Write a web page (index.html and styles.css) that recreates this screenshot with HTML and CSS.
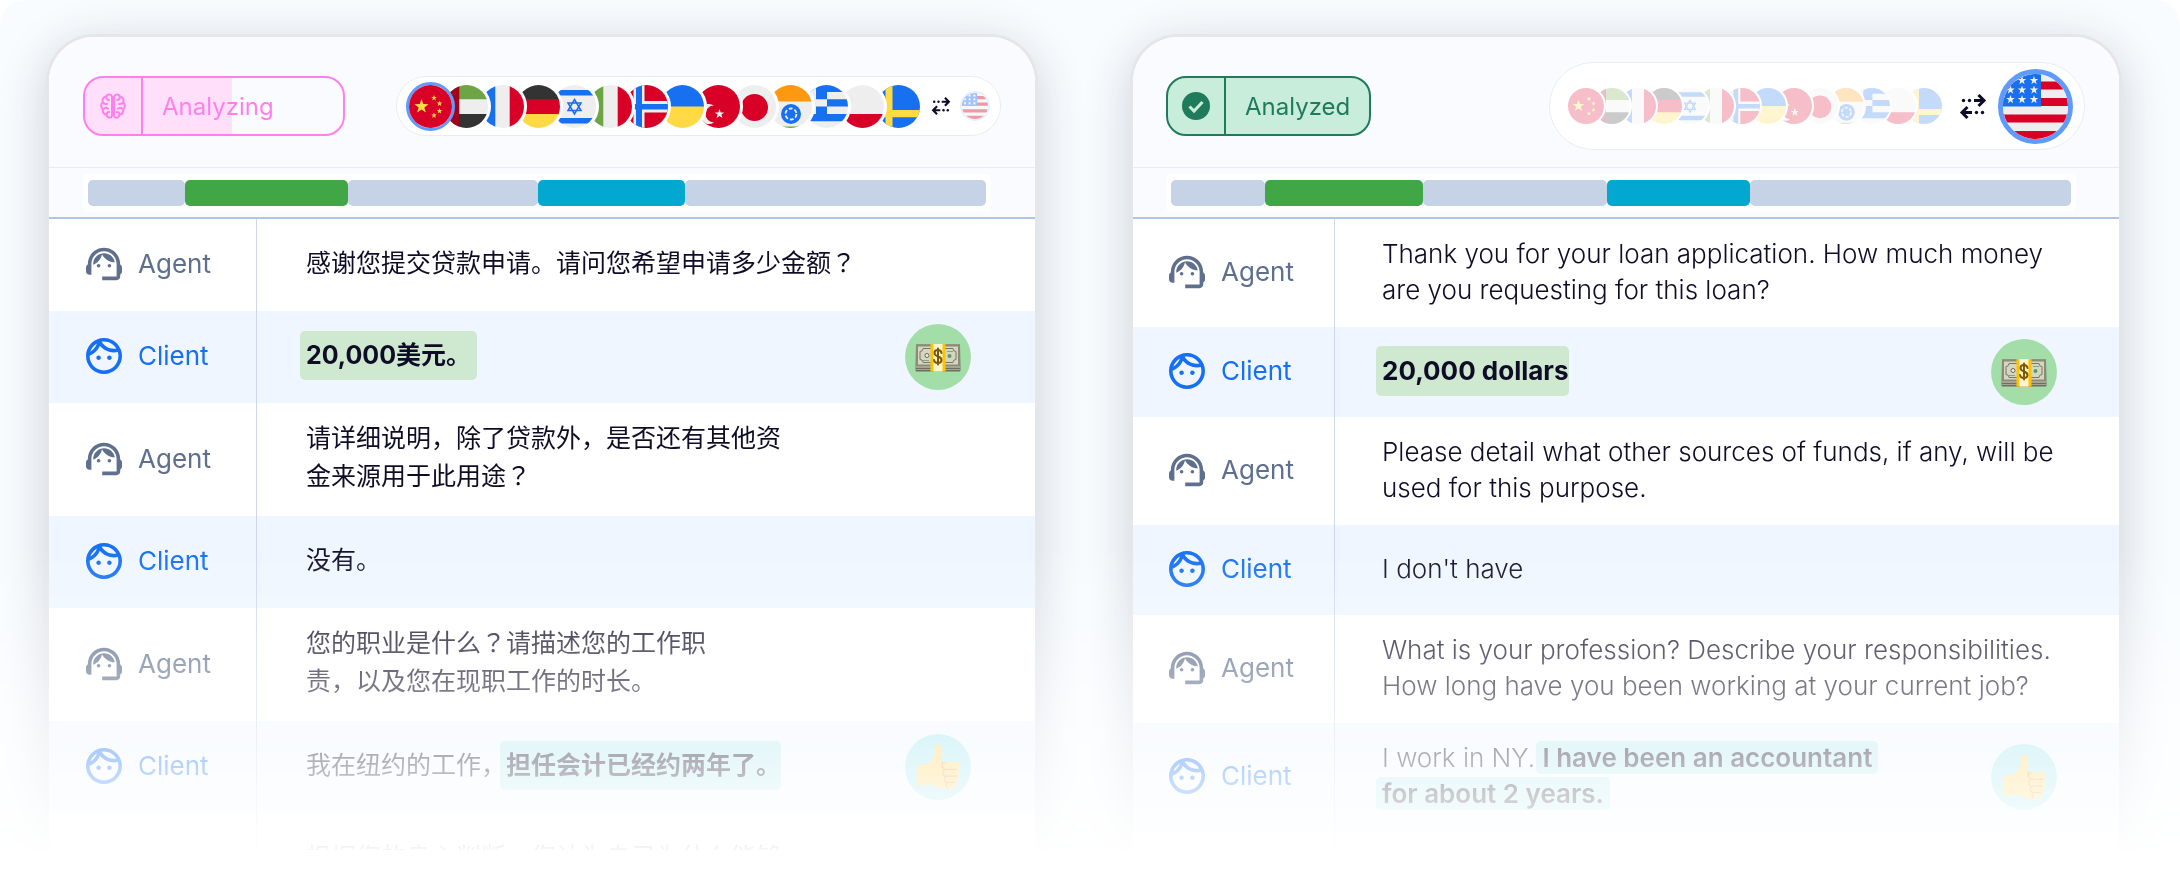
FILE: index.html
```html
<!DOCTYPE html>
<html lang="en">
<head>
    <title>Conversation analysis</title>
    <meta charset="utf-8">
    <meta name="viewport" content="width=device-width, initial-scale=1">
    <link rel="stylesheet" href="styles.css">
</head>
<body>
<!-- Shared icons and flags -->
<svg class="sprite" aria-hidden="true">
    <symbol id="star" viewBox="-10 -10 20 20">
        <path d="M0-10 2.4-3.2 9.5-3.1 3.8 1.2 5.9 8.1 0 4-5.9 8.1-3.8 1.2-9.5-3.1-2.4-3.2Z"/>
    </symbol>
    <symbol id="agent" viewBox="2 2 20 20">
        <path d="M21 12.22C21 6.73 16.74 3 12 3c-4.69 0-9 3.65-9 9.28-.6.34-1 .98-1 1.72v2c0 1.1.9 2 2 2h1v-6.1c0-3.87 3.13-7 7-7s7 3.13 7 7V19h-8v2h8c1.1 0 2-.9 2-2v-1.22c.59-.31 1-.92 1-1.64v-2.3c0-.7-.41-1.31-1-1.62z"/>
        <circle cx="9" cy="13" r="1"/>
        <circle cx="15" cy="13" r="1"/>
        <path d="M18 11.03C17.52 8.18 15.04 6 12.05 6c-3.03 0-6.29 2.51-6.03 6.45 2.47-1.01 4.33-3.21 4.86-5.89 1.31 2.63 4 4.44 7.12 4.47z"/>
    </symbol>
    <symbol id="client" viewBox="2 2 20 20">
        <path d="M10.25 13c0 .69-.56 1.25-1.25 1.25S7.75 13.69 7.75 13s.56-1.25 1.25-1.25 1.25.56 1.25 1.25zM15 11.75c-.69 0-1.25.56-1.25 1.25s.56 1.25 1.25 1.25 1.25-.56 1.25-1.25-.56-1.25-1.25-1.25zm7 .25c0 5.52-4.48 10-10 10S2 17.52 2 12 6.48 2 12 2s10 4.48 10 10zM10.66 4.12C12.06 6.44 14.6 8 17.5 8c.46 0 .91-.05 1.34-.12C17.44 5.56 14.9 4 12 4c-.46 0-.91.05-1.34.12zM4.42 9.47c1.71-.97 3.03-2.55 3.66-4.44C6.37 6 5.05 7.58 4.42 9.47zM20 12c0-.78-.12-1.53-.33-2.24-.7.15-1.42.24-2.17.24-3.13 0-5.92-1.44-7.76-3.69C8.69 8.87 6.6 10.88 4 11.86c.01.04 0 .09 0 .14 0 4.42 3.58 8 8 8s8-3.58 8-8z"/>
    </symbol>
    <symbol id="brain" viewBox="0 0 26 26">
        <g fill="none" stroke="currentColor" stroke-width="2" stroke-linecap="round" stroke-linejoin="round">
            <path d="M12 3.5C11 .9 7.2.6 6.2 3.6 3.2 3.8 1.8 6.800 2.900 9.200.6 10.800.500 14.800 2.900 16.400 2.200 19.300 4 21.500 6.500 21.700 7.500 25.400 11.300 25.600 12 22.700Z"/>
            <path d="M14 3.5C15 .9 18.800.6 19.800 3.600 22.800 3.800 24.200 6.800 23.100 9.200 25.400 10.800 25.500 14.800 23.100 16.400 23.800 19.300 22 21.500 19.500 21.700 18.500 25.400 14.700 25.600 14 22.700Z"/>
            <path d="M6.200 3.800C6.200 6.200 7.500 7 9 7M3 9.500C4 11 5.500 11.300 7 11M3.200 16.300C4.500 14.800 6.500 14.600 8 15.800M6.800 21.500C6.600 19.800 7.800 18.800 9.200 19"/>
            <path d="M19.800 3.800C19.800 6.200 18.500 7 17 7M23 9.500C22 11 20.500 11.300 19 11M22.800 16.300C21.500 14.800 19.500 14.600 18 15.800M19.200 21.500C19.400 19.800 18.200 18.800 16.800 19"/>
        </g>
    </symbol>
    <symbol id="check" viewBox="0 0 28 28">
        <circle cx="14" cy="14" r="14"/>
        <path d="M7.500 14.500 12 19 20.500 10" fill="none" stroke="#c8eddb" stroke-width="3"/>
    </symbol>
    <symbol id="swap" viewBox="0 0 28 25">
        <g fill="none" stroke="currentColor" stroke-width="3">
            <path d="M15 6.500H25M19.500 1 25 6.500 19.500 12"/>
            <path d="M13 18.500H3M8.500 13 3 18.500 8.500 24"/>
        </g>
        <circle cx="4.500" cy="6.500" r="1.700"/>
        <circle cx="10.500" cy="6.500" r="1.700"/>
        <circle cx="17.500" cy="18.500" r="1.700"/>
        <circle cx="23.500" cy="18.500" r="1.700"/>
    </symbol>

    <symbol id="cn" viewBox="0 0 43 43">
        <path fill="#d80027" d="M0 0h43v43H0z"/>
        <g fill="#ffda44">
            <use href="#star" x="5" y="14" width="15" height="15"/>
            <use href="#star" x="22" y="10" width="6" height="6"/>
            <use href="#star" x="27.500" y="15.500" width="6" height="6"/>
            <use href="#star" x="27.500" y="23" width="6" height="6"/>
            <use href="#star" x="22" y="27.500" width="6" height="6"/>
        </g>
    </symbol>
    <symbol id="ae" viewBox="0 0 43 43">
        <path fill="#eee" d="M0 0h43v43H0z"/>
        <path fill="#6da544" d="M0 0h43v14.300H0z"/>
        <path fill="#333" d="M0 29h43v14H0z"/>
        <path fill="#a2001d" d="M0 0h14.300v43H0z"/>
    </symbol>
    <symbol id="fr" viewBox="0 0 43 43">
        <path fill="#eee" d="M0 0h43v43H0z"/>
        <path fill="#1670f0" d="M0 0h14.300v43H0z"/>
        <path fill="#d80027" d="M28.700 0H43v43H28.700z"/>
    </symbol>
    <symbol id="de" viewBox="0 0 43 43">
        <path fill="#333" d="M0 0h43v15H0z"/>
        <path fill="#d80027" d="M0 14.300h43V30H0z"/>
        <path fill="#ffda44" d="M0 29h43v14H0z"/>
    </symbol>
    <symbol id="il" viewBox="0 0 43 43">
        <path fill="#eee" d="M0 0h43v43H0z"/>
        <path fill="#1670f0" d="M0 5h43v5.500H0zM0 33h43v5.500H0z"/>
        <path fill="none" stroke="#1670f0" stroke-width="1.500" d="M21.500 14.500 28 25.500H15zM21.500 29 15 18h13z"/>
    </symbol>
    <symbol id="it" viewBox="0 0 43 43">
        <path fill="#eee" d="M0 0h43v43H0z"/>
        <path fill="#6da544" d="M0 0h14.300v43H0z"/>
        <path fill="#d80027" d="M28.700 0H43v43H28.700z"/>
    </symbol>
    <symbol id="no" viewBox="0 0 43 43">
        <path fill="#d80027" d="M0 0h43v43H0z"/>
        <path fill="#eee" d="M8.500 0h11v43h-11zM0 16h43v11.500H0z"/>
        <path fill="#1670f0" d="M11 0h6v43h-6zM0 19h43v5.500H0z"/>
    </symbol>
    <symbol id="ua" viewBox="0 0 43 43">
        <path fill="#1670f0" d="M0 0h43v22H0z"/>
        <path fill="#ffda44" d="M0 21.500h43V43H0z"/>
    </symbol>
    <symbol id="tr" viewBox="0 0 43 43">
        <path fill="#d80027" d="M0 0h43v43H0z"/>
        <path fill="#eee" d="M17 20.500A10 10 0 1 0 17 37.500 8.500 8.500 0 1 1 17 20.500z"/>
        <use href="#star" x="17.500" y="24" width="10" height="10" fill="#eee"/>
    </symbol>
    <symbol id="jp" viewBox="0 0 43 43">
        <path fill="#eee" d="M0 0h43v43H0z"/>
        <circle cx="21.500" cy="22.500" r="13.500" fill="#d80027"/>
    </symbol>
    <symbol id="in" viewBox="0 0 43 43">
        <path fill="#eee" d="M0 0h43v43H0z"/>
        <path fill="#ff9811" d="M0 0h43v16.500H0z"/>
        <path fill="#6da544" d="M0 41.500h43V43H0z"/>
        <circle cx="22" cy="29" r="10" fill="#1670f0"/>
        <circle cx="22" cy="29" r="5.500" fill="none" stroke="#eee" stroke-width="1.800" stroke-dasharray="3.800 1.960"/>
    </symbol>
    <symbol id="gr" viewBox="0 0 43 43">
        <path fill="#eee" d="M0 0h43v43H0z"/>
        <path fill="#1670f0" d="M0 0h43v7H0zM0 7h22v22H0zM22 14.300h21v7.200H22zM0 29h43v7.200H0z"/>
        <path fill="#eee" d="M4 0h7v29H4zM0 14.300h22v7.200H0z"/>
    </symbol>
    <symbol id="pl" viewBox="0 0 43 43">
        <path fill="#eee" d="M0 0h43v43H0z"/>
        <path fill="#d80027" d="M0 29h43v14H0z"/>
    </symbol>
    <symbol id="se" viewBox="0 0 43 43">
        <path fill="#1670f0" d="M0 0h43v43H0z"/>
        <path fill="#ffda44" d="M8.500 0h7v43h-7zM0 25h43v7.300H0z"/>
    </symbol>
    <symbol id="us" viewBox="0 0 65 65">
        <path fill="#eee" d="M0 0h65v65H0z"/>
        <path fill="#d80027" d="M0 7.500h65v8H0zM0 24h65v8H0zM0 40.500h65v8H0zM0 57h65v8H0z"/>
        <path fill="#1670f0" d="M0 0h38v32.500H0z"/>
        <g fill="#eee">
            <use href="#star" x="3" y="2" width="9" height="9"/>
            <use href="#star" x="14.500" y="2" width="9" height="9"/>
            <use href="#star" x="26.500" y="2" width="9" height="9"/>
            <use href="#star" x="3" y="11.500" width="9" height="9"/>
            <use href="#star" x="14.500" y="11.500" width="9" height="9"/>
            <use href="#star" x="26.500" y="11.500" width="9" height="9"/>
            <use href="#star" x="3" y="21" width="9" height="9"/>
            <use href="#star" x="14.500" y="21" width="9" height="9"/>
            <use href="#star" x="26.500" y="21" width="9" height="9"/>
        </g>
    </symbol>

    <symbol id="money" viewBox="0 0 46 46">
        <path fill="#6f6f60" d="M1 10.500h44l.5 25.500c0 1-.5 1.500-1.500 1.500H2c-1 0-1.500-.5-1.500-1.500z"/>
        <path fill="#a5a595" d="M1 34h44M1 32h44v2H1zM1 35h44v1H1z"/>
        <path fill="#8b8b78" d="M1 10.500h44v21.500H1z"/>
        <path fill="#d6d5c0" d="M3 12.500h40v18H3z"/>
        <path fill="none" stroke="#77776a" d="M8 14.500h30M8 28.500h30M5 17.500v8M41 17.500v8M5 17.500q3 0 3-3M41 17.500q-3 0-3-3M5 25.500q3 0 3 3M41 25.500q-3 0-3 3"/>
        <circle cx="12" cy="21.500" r="2" fill="#f0efe0" stroke="#66665a"/>
        <circle cx="34.500" cy="22" r="2" fill="#4f9d74"/>
        <path fill="#77a98a" d="M8 26h6v1H8zM32 17h6v1h-6z"/>
        <path fill="#ffc400" d="M15.500 10h15v27.500h-15z"/>
        <path fill="#fff3d0" d="M18.500 10h9v27.500h-9z"/>
        <path fill="none" stroke="#7d5a00" stroke-width="2" stroke-linecap="round" d="M26.500 19c-.5-4-7-4-7 0 0 4.500 7 2.500 7 7 0 4-7 4-7.500 0M23 14.500v16"/>
    </symbol>
    <symbol id="thumb" viewBox="0 0 46 46">
        <path fill="#ffd565" d="M20 1c3-1.500 6 .5 7 4 1 4-.5 8-.5 13L41 18c5 0 5 6 1.500 7 3.500 1.500 3 6.500 0 7 2 2 1 6-1.500 6.300 1.500 3-.5 6.200-3.500 6.200-7 .8-13 .3-19-3l-4.500-1.200C10 42 6 42 3.500 41 1 36 1 28 3.500 21.500 6 20 10 20.500 13 20c4-3 7-8 7-13-.5-2-1-5 0-6z"/>
        <path fill="none" stroke="#e0a04a" stroke-width="1.200" stroke-linecap="round" d="M30 18.500c-4 1-3.500 6 0 6.800h12M30 25.500c-3 1-3 6 .5 6.700h11M31 32.500c-2.500 1-2 5 .5 6H40M32 38.700c-1.500 1.500-1 4 1 5.500M28.500 24c-2-2-2-4-1-6"/>
    </symbol>
</svg>

<main class="stage">
    <section class="card card-source" lang="zh-CN">
        <header class="card-header">
            <div class="status status-analyzing" role="status">
                <span class="status-icon"><svg><use href="#brain"/></svg></span>
                <span class="status-text" lang="en">Analyzing</span>
            </div>
            <div class="languages">
                <!-- Listed last to first, so each flag lies over the next one -->
                <div class="flags">
                    <svg class="flag"><use href="#se"/></svg>
                    <svg class="flag"><use href="#pl"/></svg>
                    <svg class="flag"><use href="#gr"/></svg>
                    <svg class="flag"><use href="#in"/></svg>
                    <svg class="flag"><use href="#jp"/></svg>
                    <svg class="flag"><use href="#tr"/></svg>
                    <svg class="flag"><use href="#ua"/></svg>
                    <svg class="flag"><use href="#no"/></svg>
                    <svg class="flag"><use href="#it"/></svg>
                    <svg class="flag"><use href="#il"/></svg>
                    <svg class="flag"><use href="#de"/></svg>
                    <svg class="flag"><use href="#fr"/></svg>
                    <svg class="flag"><use href="#ae"/></svg>
                    <svg class="flag flag-active"><use href="#cn"/></svg>
                </div>
                <svg class="swap"><use href="#swap"/></svg>
                <svg class="target"><use href="#us"/></svg>
            </div>
        </header>
        <div class="timeline">
            <div class="track">
                <span class="segment" style="flex-grow: 97"></span>
                <span class="segment segment-green" style="flex-grow: 163"></span>
                <span class="segment" style="flex-grow: 190"></span>
                <span class="segment segment-cyan" style="flex-grow: 147"></span>
                <span class="segment" style="flex-grow: 301"></span>
            </div>
        </div>
        <ol class="messages">
            <li class="message">
                <div class="speaker"><svg><use href="#agent"/></svg><span lang="en">Agent</span></div>
                <p class="text">感谢您提交贷款申请。请问您希望申请多少金额<span class="wide-mark" lang="ja">？</span></p>
            </li>
            <li class="message message-client">
                <div class="speaker"><svg><use href="#client"/></svg><span lang="en">Client</span></div>
                <p class="text"><mark class="mark mark-green">20,000美元。</mark></p>
                <span class="reaction reaction-green"><svg><use href="#money"/></svg></span>
            </li>
            <li class="message">
                <div class="speaker"><svg><use href="#agent"/></svg><span lang="en">Agent</span></div>
                <p class="text">请详细说明，除了贷款外，是否还有其他资<br>金来源用于此用途<span class="wide-mark" lang="ja">？</span></p>
            </li>
            <li class="message message-client">
                <div class="speaker"><svg><use href="#client"/></svg><span lang="en">Client</span></div>
                <p class="text">没有。</p>
            </li>
            <li class="message">
                <div class="speaker"><svg><use href="#agent"/></svg><span lang="en">Agent</span></div>
                <p class="text">您的职业是什么<span class="wide-mark" lang="ja">？</span>请描述您的工作职<br>责，以及您在现职工作的时长。</p>
            </li>
            <li class="message message-client">
                <div class="speaker"><svg><use href="#client"/></svg><span lang="en">Client</span></div>
                <p class="text">我在纽约的工作，<mark class="mark mark-cyan">担任会计已经约两年了。</mark></p>
                <span class="reaction reaction-cyan"><svg><use href="#thumb"/></svg></span>
            </li>
            <li class="message">
                <div class="speaker"></div>
                <p class="text">根据您的良心判断，您认为自己为什么能够</p>
            </li>
        </ol>
    </section>

    <section class="card card-target">
        <header class="card-header">
            <div class="status status-analyzed" role="status">
                <span class="status-icon"><svg><use href="#check"/></svg></span>
                <span class="status-text">Analyzed</span>
            </div>
            <div class="languages">
                <div class="flags">
                    <svg class="flag"><use href="#se"/></svg>
                    <svg class="flag"><use href="#pl"/></svg>
                    <svg class="flag"><use href="#gr"/></svg>
                    <svg class="flag"><use href="#in"/></svg>
                    <svg class="flag"><use href="#jp"/></svg>
                    <svg class="flag"><use href="#tr"/></svg>
                    <svg class="flag"><use href="#ua"/></svg>
                    <svg class="flag"><use href="#no"/></svg>
                    <svg class="flag"><use href="#it"/></svg>
                    <svg class="flag"><use href="#il"/></svg>
                    <svg class="flag"><use href="#de"/></svg>
                    <svg class="flag"><use href="#fr"/></svg>
                    <svg class="flag"><use href="#ae"/></svg>
                    <svg class="flag"><use href="#cn"/></svg>
                </div>
                <svg class="swap"><use href="#swap"/></svg>
                <svg class="target"><use href="#us"/></svg>
            </div>
        </header>
        <div class="timeline">
            <div class="track">
                <span class="segment" style="flex-grow: 94"></span>
                <span class="segment segment-green" style="flex-grow: 158"></span>
                <span class="segment" style="flex-grow: 184"></span>
                <span class="segment segment-cyan" style="flex-grow: 143"></span>
                <span class="segment" style="flex-grow: 321"></span>
            </div>
        </div>
        <ol class="messages">
            <li class="message">
                <div class="speaker"><svg><use href="#agent"/></svg>Agent</div>
                <p class="text">Thank you for your loan application. How much money<br>are you requesting for this loan?</p>
            </li>
            <li class="message message-client">
                <div class="speaker"><svg><use href="#client"/></svg>Client</div>
                <p class="text"><mark class="mark mark-green">20,000 dollars</mark></p>
                <span class="reaction reaction-green"><svg><use href="#money"/></svg></span>
            </li>
            <li class="message">
                <div class="speaker"><svg><use href="#agent"/></svg>Agent</div>
                <p class="text">Please detail what other sources of funds, if any, will be<br>used for this purpose.</p>
            </li>
            <li class="message message-client">
                <div class="speaker"><svg><use href="#client"/></svg>Client</div>
                <p class="text">I don't have</p>
            </li>
            <li class="message">
                <div class="speaker"><svg><use href="#agent"/></svg>Agent</div>
                <p class="text">What is your profession? Describe your responsibilities.<br>How long have you been working at your current job?</p>
            </li>
            <li class="message message-client">
                <div class="speaker"><svg><use href="#client"/></svg>Client</div>
                <p class="text">I work in NY. <mark class="mark mark-cyan mark-lines">I have been an accountant<br>for about 2 years.</mark></p>
                <span class="reaction reaction-cyan"><svg><use href="#thumb"/></svg></span>
            </li>
            <li class="message">
                <div class="speaker"></div>
            </li>
        </ol>
    </section>
</main>
</body>
</html>
```

FILE: styles.css
```css
*, *::before, *::after {
    margin: 0;
    padding: 0;
    box-sizing: border-box;
}

body {
    background-color: #ffffff;
    color: #0f0c26;
    font-family: Inter, "Noto Sans CJK SC", sans-serif;
    font-size: 26px;
    font-weight: 300;
}

svg {
    display: block;
    flex-shrink: 0;
    fill: currentColor;
}

.sprite {
    position: absolute;
    width: 0;
    height: 0;
}

/* Both cards fade out towards the bottom */
.stage {
    display: grid;
    grid-template-columns: 1fr 1fr;
    gap: 92px;
    max-height: 850px;
    padding: 34px 58px 0 46px;
    overflow: hidden;
    border-radius: 24px 24px 0 0;
    background-color: #f8fcff;
    -webkit-mask-image: linear-gradient(#000 64%, rgba(0, 0, 0, 0.04));
    mask-image: linear-gradient(#000 64%, rgba(0, 0, 0, 0.04));
}

.card {
    min-width: 0;
    overflow: hidden;
    border: 3px solid #e5e6ea;
    border-bottom: none;
    border-radius: 48px 48px 0 0;
    background-color: #ffffff;
    box-shadow: 0 10px 48px rgba(40, 45, 70, 0.2);
}

.card-header {
    display: flex;
    align-items: center;
    justify-content: space-between;
    height: 131px;
    padding: 8px 34px 0;
    border-bottom: 1px solid #e8ebf5;
    background-color: #fafbff;
}

/* Status badge */
.status {
    display: flex;
    align-items: stretch;
    height: 60px;
    border: 2px solid;
    border-radius: 20px;
    overflow: hidden;
}

.status-icon {
    display: flex;
    align-items: center;
    justify-content: center;
    width: 58px;
    border-right: 2px solid;
}

.status-text {
    display: flex;
    align-items: center;
    padding: 0 19px;
    font-size: 24px;
    font-weight: 400;
}

.status-analyzing {
    width: 262px;
    color: #ff80ec;
    background-image: linear-gradient(90deg, #ffdff9 57%, #fafbff 57%);
}

.status-analyzing svg {
    width: 26px;
    height: 26px;
}

.status-analyzed {
    color: #207a5c;
    background-color: #c8eddb;
}

.status-analyzed svg {
    width: 28px;
    height: 28px;
}

/* Language pill */
.languages {
    display: flex;
    align-items: center;
    height: 60px;
    border: 1px solid #e8ecf7;
    border-radius: 44px;
    background-color: #ffffff;
}

.flags {
    display: flex;
    flex-direction: row-reverse;
}

/* The white rim lies over the neighbour */
.flag {
    position: relative;
    width: 49px;
    height: 49px;
    margin-left: -13px;
    border: 3px solid #ffffff;
    border-radius: 50%;
    background-color: #ffffff;
}

.flag:last-child {
    margin-left: 0;
}

.flag-active {
    border-color: #5f9bfc;
}

.swap {
    color: #0f0c26;
}

.target {
    border-radius: 50%;
}

.card-source .languages {
    padding: 0 10px 0 9px;
}

.card-source .swap {
    width: 20px;
    height: 18px;
    margin: 0 9px 0 8px;
}

.card-source .target {
    width: 30px;
    height: 30px;
    border: 2px solid #c4dafe;
    opacity: 0.4;
}

.card-target .card-header {
    padding-left: 33px;
}

.card-target .languages {
    height: 88px;
    padding: 0 11px 0 13px;
}

.card-target .flags {
    padding-left: 3px;
    opacity: 0.25;
}

.card-target .flag {
    width: 40px;
    height: 40px;
    margin-left: -14px;
    border-width: 2px;
}

.card-target .flag:last-child {
    margin-left: 0;
}

.card-target .swap {
    width: 28px;
    height: 25px;
    margin: 0 11px 0 15px;
}

.card-target .target {
    width: 75px;
    height: 75px;
    border: 5px solid #5f9bfc;
}

/* Timeline */
.timeline {
    padding: 6px 44px 5px 34px;
    border-bottom: 2px solid #b4c4e4;
    background-color: #fafbff;
}

.card-target .timeline {
    padding-right: 43px;
    padding-left: 33px;
}

.track {
    display: flex;
    height: 38px;
    padding: 6px 5px;
    border-radius: 5px;
    background-color: #ffffff;
}

.segment {
    flex-basis: 0;
    border-radius: 5px;
    background-color: #c6d2e6;
}

.segment-green {
    background-color: #40a646;
}

.segment-cyan {
    background-color: #02a8cf;
}

/* Transcript */
.messages {
    list-style: none;
}

.message {
    position: relative;
    display: grid;
    grid-template-columns: 202px 1fr;
    min-height: 90px;
    line-height: 36px;
}

.message-client {
    background-color: #eff6ff;
}

.speaker {
    display: flex;
    align-items: center;
    gap: 16px;
    padding: 0 0 2px 36px;
    border-right: 1px solid #cfd8ea;
    color: #5f6f8e;
    font-weight: 400;
}

.message-client .speaker {
    color: #1570f5;
}

.speaker svg {
    width: 36px;
    height: 36px;
}

.text {
    align-self: center;
    padding: 17px 0 19px 47px;
}

.card-source .message {
    grid-template-columns: 208px 1fr;
    min-height: 92px;
    line-height: 38px;
}

.card-source .speaker {
    padding-left: 37px;
}

.card-source .text {
    padding: 16px 0 21px 49px;
    font-size: 25px;
    font-weight: 400;
}

/* Question mark centred in its full-width cell */
.wide-mark {
    font-family: "Noto Sans CJK JP", sans-serif;
    line-height: 1;
}

.mark {
    margin-left: -6px;
    padding: 9px 0 10px 6px;
    border-radius: 5px;
    color: inherit;
    font-weight: 700;
}

.mark-green {
    background-color: #cfe9d1;
}

.card-source .mark-green {
    padding-right: 6px;
}

.mark-cyan {
    background-color: #b8e9ef;
}

.mark-lines {
    padding: 1px 6px;
    font-weight: 600;
    -webkit-box-decoration-break: clone;
    box-decoration-break: clone;
}

/* Round emoji over the right end of the message */
.reaction {
    position: absolute;
    top: 50%;
    right: 62px;
    display: flex;
    align-items: center;
    justify-content: center;
    width: 66px;
    height: 66px;
    border-radius: 50%;
    transform: translateY(-50%);
}

.card-source .reaction {
    right: 64px;
}

.reaction svg {
    width: 46px;
    height: 46px;
}

.reaction-green {
    background-color: #a3dea8;
}

.reaction-cyan {
    background-color: #a5e6f0;
}
```
